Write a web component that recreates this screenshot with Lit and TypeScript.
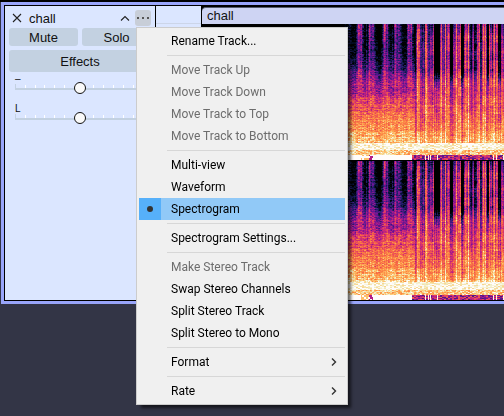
import { LitElement, html, css, svg } from "lit";
import { customElement, property } from "lit/decorators.js";
import { classMap } from "lit/directives/class-map.js";

type Stop = [number, number];
type Rgb = [number, number, number];

const PALETTE: [number, Rgb][] = [
  [0, [0, 0, 0]],
  [0.1, [6, 16, 44]],
  [0.2, [32, 30, 104]],
  [0.32, [98, 22, 146]],
  [0.44, [172, 26, 138]],
  [0.55, [222, 56, 104]],
  [0.66, [246, 104, 70]],
  [0.77, [254, 152, 72]],
  [0.87, [252, 206, 124]],
  [0.94, [240, 238, 200]],
  [1, [255, 252, 250]],
];

function colour(v: number): Rgb {
  const t = Math.max(0, Math.min(1, v));
  for (let i = 1; i < PALETTE.length; i++) {
    if (t <= PALETTE[i][0]) {
      const [a, ca] = PALETTE[i - 1];
      const [b, cb] = PALETTE[i];
      const k = (t - a) / (b - a);
      return [0, 1, 2].map((n) => ca[n] + (cb[n] - ca[n]) * k) as Rgb;
    }
  }
  return PALETTE[PALETTE.length - 1][1];
}

function curve(stops: Stop[], x: number): number {
  if (x <= stops[0][0]) return stops[0][1];
  for (let i = 1; i < stops.length; i++) {
    if (x <= stops[i][0]) {
      const [a, va] = stops[i - 1];
      const [b, vb] = stops[i];
      return va + ((vb - va) * (x - a)) / (b - a);
    }
  }
  return stops[stops.length - 1][1];
}

function hash(x: number, y: number, seed = 0): number {
  let h = Math.imul(x + 101, 374761393) ^ Math.imul(y + 57, 668265263) ^ Math.imul(seed + 7, 974634777);
  h = Math.imul(h ^ (h >>> 13), 1274126177);
  return ((h ^ (h >>> 16)) >>> 0) / 4294967295;
}

/* Level by height, 0 at the highest frequency and 1 at the lowest. */
const QUIET: Stop[] = [[0, -0.16], [0.2, -0.08], [0.3, 0.08], [0.38, 0.22], [0.48, 0.38], [0.58, 0.54], [0.68, 0.68], [0.78, 0.79], [0.87, 0.87]];
const LOUD: Stop[] = [[0, 0.28], [0.08, 0.4], [0.34, 0.43], [0.42, 0.56], [0.6, 0.6], [0.76, 0.69], [0.87, 0.84]];

/* Bursts in the first part: centre, half width, strength. */
const BURSTS: [number, number, number][] = [
  [147, 3, 0.28], [156, 1, 0.46], [159, 3, 0.46], [167, 1, 0.46], [171, 2, 0.48], [182, 1, 0.54],
  [185, 3, 0.4], [193, 1, 0.48], [197, 3, 0.44], [206, 1, 0.46], [209, 2, 0.46],
];
/* Gaps and bright lines in the second part, in columns. */
const GAPS: [number, number, number][] = [
  [213, 213, 0.3], [219, 222, 0.2], [226, 227, 0.2], [232, 237, 0.55], [244, 244, 0.2], [248, 250, 0.5],
  [259, 261, 0.55], [268, 269, 0.3], [272, 274, 0.3], [278, 279, 0.22], [285, 286, 0.5], [290, 290, 0.3], [296, 298, 0.45],
];
const LINES = [215, 216, 217, 223, 224, 231, 239, 243, 246, 254, 258, 263, 266, 275, 277, 281, 283, 287, 292, 294, 300];
const DENSE_START = 213;
const RUMBLE_START = 210;

function level(x: number, y: number, h: number): number {
  const f = y / h;
  const fine = hash(x >> 1, y, 1) - 0.5;
  const grain = hash(x, y, 2) - 0.5;
  const row = hash(0, y, 3) - 0.5;
  const column = hash(x, 0, 4) - 0.5;
  const broad = hash(Math.floor(x / 4), Math.floor(y / 9), 8) - 0.5;
  if (f > 0.962) {
    if (x < RUMBLE_START) return x > 158 && x < 171 && hash(x >> 1, y >> 1, 5) > 0.5 ? (x > 166 ? 0.45 : 0.84) : 1;
    return hash(x, 9, 6) > 0.93 ? 0.98 : 0.46 + fine * 0.4;
  }
  if (f > 0.925) return 0.86 + fine * 0.22 + grain * 0.1;
  if (f > 0.87) return 0.97 + fine * 0.18;
  if (x < DENSE_START) {
    let v = curve(QUIET, f) + fine * 0.18 + grain * 0.1 + column * 0.1 * f + row * 0.1 * Math.min(1, f * 2) + broad * 0.06;
    for (const [c, w, s] of BURSTS) {
      const d = Math.abs(x - c);
      if (d <= w + 2) v += (d <= w ? s * (1 - d / (w + 2)) : 0.14) * Math.max(0, 1 - f * 1.5);
    }
    return v;
  }
  const lower = Math.max(0, Math.min(1, (f - 0.34) / 0.14));
  let v = curve(LOUD, f) + column * (0.26 - f * 0.1) + fine * 0.12 + grain * 0.12 + row * 0.06 + broad * 0.12;
  if (LINES.includes(x)) v += 0.24 * (1 - f * 0.7);
  for (const [a, b, s] of GAPS) {
    if (x >= a && x <= b) v -= s * (1 - lower) + 0.2 * lower * (1.1 - f);
  }
  return v;
}

@customElement("spectrogram-view")
class SpectrogramView extends LitElement {
  static styles = css`
    :host { display: block; background: #000; overflow: hidden; }
    .plot { display: block; height: 100%; }
  `;

  firstUpdated() {
    const canvas = this.renderRoot.querySelector("canvas")!;
    const w = Math.max(1, this.clientWidth);
    const h = Math.max(1, this.clientHeight);
    canvas.width = w;
    canvas.height = h;
    const ctx = canvas.getContext("2d")!;
    const image = ctx.createImageData(w, h);
    for (let y = 0; y < h; y++) {
      for (let x = 0; x < w; x++) {
        const [r, g, b] = colour(level(x, y, h));
        image.data.set([r, g, b, 255], (y * w + x) * 4);
      }
    }
    ctx.putImageData(image, 0, 0);
  }

  render() {
    return html`<canvas class="plot"></canvas>`;
  }
}

@customElement("track-slider")
class TrackSlider extends LitElement {
  static styles = css`
    :host { display: block; height: 30px; font: 10px/14px "Liberation Sans", Arial, sans-serif; color: #111; }
    .ends { display: flex; justify-content: space-between; height: 10px; padding: 0 6px; }
    .rail { display: grid; height: 12px; }
    .rail > * { grid-area: 1 / 1; }
    .scale { display: block; width: 100%; height: 12px; }
    .range { appearance: none; background: none; margin: 0; width: 100%; height: 12px; }
    .range::-webkit-slider-thumb {
      appearance: none; box-sizing: border-box; width: 12px; height: 12px;
      border: 1px solid #111; border-radius: 50%; background: #fafafa;
    }
  `;
  @property() low = "";
  @property() high = "";
  @property() label = "";

  render() {
    const ticks = Array.from({ length: 14 }, (_, i) => Math.round(6 + i * 9.8));
    return html`
      <div class="ends"><span>${this.low}</span><span>${this.high}</span></div>
      <div class="rail">
        <svg class="scale" viewBox="0 0 142 12" preserveAspectRatio="none" shape-rendering="crispEdges">
          <rect x="6" y="6" width="130" height="2" fill="#c3d1e1" />
          ${ticks.map((x, i) => svg`<rect x=${x} y=${i === 0 ? 2 : 3} width="1" height=${i === 0 ? 4 : 3} fill=${i === 0 ? "#c3d1e1" : "#fff"} />`)}
        </svg>
        <input class="range" type="range" min="-100" max="100" value="0" aria-label=${this.label} />
      </div>`;
  }
}

@customElement("track-panel")
class TrackPanel extends LitElement {
  static styles = css`
    :host { display: block; background: #dbe6ff; padding: 4px; font: 13px/16px "Liberation Sans", Arial, sans-serif; color: #111; }
    .head { display: flex; align-items: center; height: 16px; margin-bottom: 2px; }
    .name { flex: 1; padding: 2px 0 0 4px; }
    button { border: 0; margin: 0; padding: 0; font: inherit; color: inherit; background: none; display: block; }
    .icon { width: 16px; height: 16px; }
    .icon svg { display: block; }
    .collapse { margin-right: 2px; }
    .more { background: #c8ced8; border-radius: 3px; }
    .pair { display: grid; grid-template-columns: 1fr 1fr; gap: 4px; margin-bottom: 4px; }
    .action { height: 18px; width: 100%; background: #c3d1e1; border-radius: 3px; padding-top: 2px; }
    .wide { height: 22px; }
  `;
  @property() name = "";

  render() {
    return html`
      <div class="head">
        <button class="icon" aria-label="Close track">
          <svg width="16" height="16" viewBox="0 0 16 16"><path d="M4 4l8 8M12 4l-8 8" stroke="#222" stroke-width="1.1" fill="none" /></svg>
        </button>
        <span class="name">${this.name}</span>
        <button class="icon collapse" aria-label="Collapse track">
          <svg width="16" height="16" viewBox="0 0 16 16"><path d="M4 10.500L8 6.500l4 4" stroke="#222" stroke-width="1.100" fill="none" /></svg>
        </button>
        <button class="icon more" aria-label="Track menu">
          <svg width="16" height="16" viewBox="0 0 16 16" fill="#555"><rect x="2" y="7" width="2" height="2" /><rect x="7" y="7" width="2" height="2" /><rect x="12" y="7" width="2" height="2" /></svg>
        </button>
      </div>
      <div class="pair">
        <button class="action">Mute</button>
        <button class="action">Solo</button>
      </div>
      <button class="action wide">Effects</button>
      <track-slider low="–" high="+" label="Gain"></track-slider>
      <track-slider low="L" high="R" label="Pan"></track-slider>`;
  }
}

interface Entry {
  text: string;
  disabled?: boolean;
  checked?: boolean;
  submenu?: boolean;
}

const MENU: Entry[][] = [
  [{ text: "Rename Track..." }],
  [
    { text: "Move Track Up", disabled: true },
    { text: "Move Track Down", disabled: true },
    { text: "Move Track to Top", disabled: true },
    { text: "Move Track to Bottom", disabled: true },
  ],
  [{ text: "Multi-view" }, { text: "Waveform" }, { text: "Spectrogram", checked: true }],
  [{ text: "Spectrogram Settings..." }],
  [
    { text: "Make Stereo Track", disabled: true },
    { text: "Swap Stereo Channels" },
    { text: "Split Stereo Track" },
    { text: "Split Stereo to Mono" },
  ],
  [{ text: "Format", submenu: true }],
  [{ text: "Rate", submenu: true }],
];

@customElement("track-menu")
class TrackMenu extends LitElement {
  static styles = css`
    :host {
      display: block; box-sizing: border-box; padding: 2px; border: 1px solid #ccc;
      background: #f0f0f0; box-shadow: 4px 4px 3px -1px rgba(0, 0, 0, 0.6);
      font: 12px/22px Roboto, "Open Sans", sans-serif; color: #000;
    }
    .group + .group { margin-top: 3px; }
    .group + .group::before { content: ""; display: block; height: 1px; margin: 0 0 3px 28px; background: #d7d7d7; }
    .item {
      display: grid; grid-template-columns: 22px 1fr 22px; align-items: center; width: 100%; height: 22px;
      margin: 0; padding: 0; border: 0; background: none; font: inherit; color: inherit; text-align: left;
    }
    .item:disabled { color: #6d6d6d; }
    .text { padding-left: 10px; white-space: nowrap; }
    .mark { display: grid; place-items: center; height: 22px; }
    .checked { background: #91c9f7; }
    .checked .mark { background: #56b0fa; }
    .dot { width: 6px; height: 6px; border-radius: 50%; background: #333; }
    .arrow { display: block; }
  `;

  render() {
    return html`${MENU.map(
      (group) => html`<div class="group" role="group">
        ${group.map(
          (e) => html`<button class=${classMap({ item: true, checked: !!e.checked })} ?disabled=${e.disabled}>
            <span class="mark">${e.checked ? html`<span class="dot"></span>` : ""}</span>
            <span class="text">${e.text}</span>
            ${e.submenu
              ? html`<svg class="arrow" width="22" height="22" viewBox="0 0 22 22"><path d="M9 7.500l3.500 3.500L9 14.500" fill="none" stroke="#333" stroke-width="1.400" /></svg>`
              : ""}
          </button>`
        )}
      </div>`
    )}`;
  }
}

@customElement("app-root")
class AppRoot extends LitElement {
  static styles = css`
    :host { display: block; position: relative; box-sizing: border-box; min-height: 100vh; padding: 2px 0 0 1px; background: #333546; overflow: hidden; }
    .top { height: 2px; margin: -2px 0 0 -1px; background: #000; }
    .track { border: 3px solid #99a5fa; border-right: 0; }
    .frame { display: grid; grid-template-columns: 150px 45px 1fr; gap: 1px; border: 1px solid #000; border-right: 0; background: #000; }
    .ruler { background: #dbe6ff; }
    .ruler-head { height: 17px; border-bottom: 1px solid #ccd5e8; }
    .clip { min-width: 0; padding-top: 1px; }
    .title {
      height: 16px; padding-left: 5px; border-top: 1px solid #555b6b; border-radius: 4px 0 0 0; background: #ced4f3;
      font: 13px/16px "Liberation Sans", Arial, sans-serif; color: #111;
    }
    .channel { height: 136px; }
    .channel + .channel { height: 139px; margin-top: 1px; }
    .menu { position: absolute; left: 136px; top: 27px; width: 212px; }
  `;

  render() {
    return html`
      <div class="top"></div>
      <main class="track">
        <div class="frame">
          <track-panel name="chall"></track-panel>
          <div class="ruler"><div class="ruler-head"></div></div>
          <section class="clip">
            <div class="title">chall</div>
            <spectrogram-view class="channel"></spectrogram-view>
            <spectrogram-view class="channel"></spectrogram-view>
          </section>
        </div>
      </main>
      <track-menu class="menu"></track-menu>`;
  }
}
